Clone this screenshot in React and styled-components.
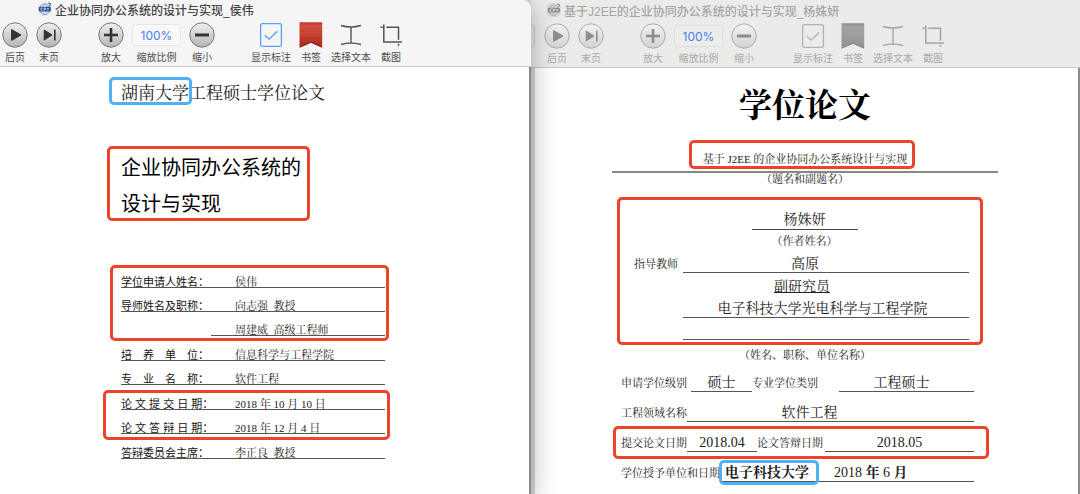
import React from 'react';
import styled, { createGlobalStyle } from 'styled-components';

const sans = '"Liberation Sans", "Noto Sans CJK SC", sans-serif';
const serif = '"Liberation Serif", "Noto Serif CJK SC", "Noto Sans CJK SC", serif';

const RED = '#ee432b';
const BLUE = '#4db1f7';

function AppIcon({ dimmed }) {
    const ring = dimmed ? '#b5b5b5' : '#7f95bd';
    const band = dimmed ? '#8c8c8c' : '#2b4f9e';
    return (
        <svg width="14" height="14" viewBox="0 0 14 14" aria-hidden="true">
            <rect x="0.5" y="0.5" width="13" height="13" rx="3" fill={dimmed ? '#e2e2e2' : '#fff'} stroke={dimmed ? '#d0d0d0' : '#dcdcdc'} strokeWidth="0.6" />
            <circle cx="6.8" cy="7.2" r="5.4" fill={dimmed ? '#cfcfcf' : '#cdd8ea'} stroke={ring} />
            <rect x="0.8" y="4.8" width="12" height="4.8" rx="1" fill={band} />
            <path d="M4.6 6H3v2.2h1.6M6.2 8.6V6h1.4v1.3H6.2M9 6l.9 1.1.9-1.1M9.9 7.1v1.5" fill="none" stroke="#fff" strokeWidth="0.6" />
            <path d="M10.3 1l2.2.8-.8 2.2" fill="none" stroke={dimmed ? '#777' : '#333'} />
        </svg>
    );
}

function RoundIcon({ id, dimmed, children }) {
    const color = dimmed ? '#8d8d8d' : '#333';
    return (
        <svg width="26" height="26" viewBox="0 0 26 26" fill={color} stroke={color} aria-hidden="true">
            <defs>
                <linearGradient id={id} x1="0" y1="0" x2="0" y2="1">
                    <stop offset="0" stopColor={dimmed ? '#f2f2f2' : '#f0f0f0'} />
                    <stop offset="1" stopColor={dimmed ? '#d2d2d2' : '#b4b4b4'} />
                </linearGradient>
            </defs>
            <circle cx="13" cy="13" r="12.2" fill={`url(#${id})`} stroke={dimmed ? '#aaa' : '#777'} />
            {children}
        </svg>
    );
}

function CheckIcon({ dimmed }) {
    return (
        <svg width="24" height="26" viewBox="0 0 24 26" fill="none" stroke={dimmed ? '#b2b2b2' : '#5c9df5'} aria-hidden="true">
            <rect x="1.6" y="1.7" width="20.8" height="22.6" rx="1.5" strokeWidth="1.3" />
            <path d="M6 13.2l4.2 4L18.2 9.2" strokeWidth="1.3" />
        </svg>
    );
}

function BookmarkIcon({ id, dimmed }) {
    return (
        <svg width="24" height="28" viewBox="0 0 24 28" aria-hidden="true">
            <defs>
                <linearGradient id={id} x1="0" y1="0" x2="0" y2="1">
                    <stop offset="0" stopColor={dimmed ? '#8e8e8e' : '#b93a2b'} />
                    <stop offset="0.15" stopColor={dimmed ? '#a2a2a2' : '#d24a38'} />
                    <stop offset="1" stopColor={dimmed ? '#929292' : '#ae2a1e'} />
                </linearGradient>
            </defs>
            <path d="M0.5 1.2H23.2V26.8L12 21.8 0.5 26.8Z" fill={`url(#${id})`} />
            <path d="M1 26L12 21.2 23 26" fill="none" stroke={dimmed ? '#858585' : '#7d2219'} />
            <path d="M1 5.5H23M1 8.5H23M1 11.5H23M1 14.5H23" stroke="#fff" strokeOpacity="0.06" />
        </svg>
    );
}

function TextSelectIcon({ dimmed }) {
    return (
        <svg width="22" height="22" viewBox="0 0 22 22" fill="none" stroke={dimmed ? '#a5a5a5' : '#555'} strokeWidth="1.4" aria-hidden="true">
            <path d="M1 1.5Q11 4.5 21 1.5M1 20.5Q11 17.5 21 20.5M11 3V19" />
        </svg>
    );
}

function CropIcon({ dimmed }) {
    return (
        <svg width="22" height="24" viewBox="0 0 22 24" fill="none" stroke={dimmed ? '#a5a5a5' : '#555'} strokeWidth="1.5" aria-hidden="true">
            <path d="M3.8 1.5V19H22M0.5 4.3H2.8M6.3 4.3H18.5V16.7M18.5 20.8V22.8" />
        </svg>
    );
}

function WindowHeader({ name, title, dimmed }) {
    return (
        <Header $dimmed={dimmed}>
            <TitleRow $dimmed={dimmed}>
                <AppIcon dimmed={dimmed} />
                <span>{title}</span>
            </TitleRow>
            <Toolbar $dimmed={dimmed}>
                {dimmed && <CutField />}
                <ToolGroup>
                    <Tool>
                        <Glyph>
                            <RoundIcon id={`${name}-next`} dimmed={dimmed}>
                                <path d="M9.6 7.6L19 13 9.6 18.4Z" />
                            </RoundIcon>
                        </Glyph>
                        后页
                    </Tool>
                    <Tool>
                        <Glyph>
                            <RoundIcon id={`${name}-last`} dimmed={dimmed}>
                                <path d="M8.2 8L16 13 8.2 18Z" />
                                <path d="M18.8 7.5V18.5" strokeWidth="1.6" />
                            </RoundIcon>
                        </Glyph>
                        末页
                    </Tool>
                </ToolGroup>
                <ToolGroup>
                    <Tool>
                        <Glyph>
                            <RoundIcon id={`${name}-in`} dimmed={dimmed}>
                                <path d="M13 6V20M6 13H20" strokeWidth="2.6" />
                            </RoundIcon>
                        </Glyph>
                        放大
                    </Tool>
                    <ZoomField $dimmed={dimmed}>
                        <Glyph>
                            <input type="text" defaultValue="100%" />
                        </Glyph>
                        缩放比例
                    </ZoomField>
                    <Tool>
                        <Glyph>
                            <RoundIcon id={`${name}-out`} dimmed={dimmed}>
                                <path d="M6 13H20" strokeWidth="3" />
                            </RoundIcon>
                        </Glyph>
                        缩小
                    </Tool>
                </ToolGroup>
                <ToolGroup>
                    <Tool $width={40}>
                        <Glyph><CheckIcon dimmed={dimmed} /></Glyph>
                        显示标注
                    </Tool>
                    <Tool $width={24}>
                        <Glyph><BookmarkIcon id={`${name}-mark`} dimmed={dimmed} /></Glyph>
                        书签
                    </Tool>
                    <Tool $width={40}>
                        <Glyph><TextSelectIcon dimmed={dimmed} /></Glyph>
                        选择文本
                    </Tool>
                    <Tool $width={24}>
                        <Glyph><CropIcon dimmed={dimmed} /></Glyph>
                        截图
                    </Tool>
                </ToolGroup>
            </Toolbar>
        </Header>
    );
}

function Row({ label, value, indent }) {
    return (
        <InfoRow $indent={indent}>
            {label && <dt>{label}</dt>}
            <dd>{value}</dd>
        </InfoRow>
    );
}

function HunanThesis() {
    return (
        <HunanPage>
            <School>
                <Marked as="span" $color={BLUE} $inset="-7px -3px -2px -12px">湖南大学</Marked>
                工程硕士学位论文
            </School>
            <ThesisTitle>
                <Marked as="span" $color={RED} $inset="-4px -9px 1px -14px">
                    企业协同办公系统的<br />设计与实现
                </Marked>
            </ThesisTitle>
            <InfoList>
                <Marked $color={RED} $inset="1px -4px -5px -11px">
                    <Row label="学位申请人姓名：" value="侯伟" />
                    <Row label="导师姓名及职称：" value="向志强  教授" />
                    <Row indent value="周建威  高级工程师" />
                </Marked>
                <div>
                    <Row label="培　养　单　位：" value="信息科学与工程学院" />
                    <Row label="专　业　名　称：" value="软件工程" />
                </div>
                <Marked $color={RED} $inset="4px -5px -6px -18px">
                    <Row label="论 文 提 交 日 期：" value="2018 年 10 月 10 日" />
                    <Row label="论 文 答 辩 日 期：" value="2018 年 12 月 4 日" />
                </Marked>
                <div>
                    <Row label="答辩委员会主席：" value="李正良  教授" />
                </div>
            </InfoList>
        </HunanPage>
    );
}

function UestcThesis() {
    return (
        <UestcPage>
            <Heading>学位论文</Heading>
            <Topic>
                <Marked as="span" $color={RED} $inset="-13px -8px -4px -14px">
                    基于 J2EE 的企业协同办公系统设计与实现
                </Marked>
            </Topic>
            <Caption>（题名和副题名）</Caption>
            <People>
                <Marked $color={RED} $inset="-15px -8px -5px -17px">
                    <Author>杨姝妍</Author>
                    <Caption $space={5}>（作者姓名）</Caption>
                    <Advisor>
                        <Label>指导教师</Label>
                        <Blank $shift={42}>高原</Blank>
                        <Blank $plain $shift={48}><u>副研究员</u></Blank>
                        <Blank $shift={7}>电子科技大学光电科学与工程学院</Blank>
                        <EmptyBlank />
                    </Advisor>
                </Marked>
            </People>
            <Caption $space={9}>（姓名、职称、单位名称）</Caption>
            <Fields>
                <Field>
                    <Label>申请学位级别</Label>
                    <Blank $width={61} $gap={4}>硕士</Blank>
                    <Label>专业学位类别</Label>
                    <Blank $gap={21} $shift={10}>工程硕士</Blank>
                </Field>
                <Field>
                    <Label>工程领域名称</Label>
                    <Blank $shift={42}>软件工程</Blank>
                </Field>
                <Marked $color={RED} $inset="-8px -15px -7px -8px">
                    <Field>
                        <Label>提交论文日期</Label>
                        <Blank $width={70}>2018.04</Blank>
                        <Label>论文答辩日期</Label>
                        <Blank $gap={2}>2018.05</Blank>
                    </Field>
                </Marked>
                <Field>
                    <Label>学位授予单位和日期</Label>
                    <Award>
                        <Marked as="strong" $color={BLUE} $inset="-5px -10px -4px -6px">电子科技大学</Marked>
                        <span>2018 <b>年</b> 6 <b>月</b></span>
                    </Award>
                </Field>
            </Fields>
        </UestcPage>
    );
}

function App() {
    return (
        <Desktop>
            <GlobalStyle />
            <FrontWindow>
                <WindowHeader name="front" title="企业协同办公系统的设计与实现_侯伟" />
                <HunanThesis />
            </FrontWindow>
            <BackWindow>
                <WindowHeader name="back" title="基于J2EE的企业协同办公系统的设计与实现_杨姝妍" dimmed />
                <UestcThesis />
            </BackWindow>
        </Desktop>
    );
}

export default App;

const GlobalStyle = createGlobalStyle`
    *{
        box-sizing: border-box;
    }
    body{
        margin: 0;
        font-family: ${sans};
    }
    h1, h2, p, dl, dd{
        margin: 0;
        font-weight: normal;
    }
`;

const Desktop = styled.main`
    display: grid;
    grid-template-columns: 531fr 549fr;
    min-height: 100vh;
    overflow: hidden;
    background: #d4d4d2;
`;

const FrontWindow = styled.section`
    display: flex;
    flex-direction: column;
    position: relative;
    z-index: 1;
    border-radius: 0 8px 0 0;
    background: #f5f5f5;
    box-shadow: 0 6px 26px rgba(0, 0, 0, 0.32);
`;

const BackWindow = styled.section`
    display: flex;
    flex-direction: column;
    background: #ebebea;
`;

const Header = styled.header`
    padding-top: ${p => p.$dimmed ? 1 : 0}px;
    border-bottom: 1px solid ${p => p.$dimmed ? '#c8c8c6' : '#cbcbcb'};
`;

const TitleRow = styled.div`
    display: flex;
    align-items: center;
    gap: 3px;
    height: 18px;
    margin-bottom: 3px;
    padding-left: ${p => p.$dimmed ? 16 : 38}px;
    color: ${p => p.$dimmed ? '#a6a6a6' : '#444'};
    font-size: 12px;
    font-weight: 500;
    white-space: nowrap;
`;

const Toolbar = styled.div`
    display: flex;
    gap: 36px;
    padding: 0 0 1px ${p => p.$dimmed ? 0 : 2}px;
    color: ${p => p.$dimmed ? '#a8a8a8' : '#4c4c4c'};
`;

const ToolGroup = styled.div`
    display: flex;
    gap: 8px;
`;

/* end of a field that the front window covers */
const CutField = styled.span`
    width: 4px;
    height: 22px;
    margin: 3px -27px 0 0;
    border: 1px solid #d2d2d0;
    border-left: 0;
    border-radius: 0 3px 3px 0;
`;

const Tool = styled.button`
    display: flex;
    flex-direction: column;
    align-items: center;
    gap: 2px;
    width: ${p => p.$width || 26}px;
    padding: 0;
    border: 0;
    background: none;
    color: inherit;
    font: 10px/14px ${sans};
    white-space: nowrap;
`;

const ZoomField = styled.label`
    display: flex;
    flex-direction: column;
    align-items: center;
    gap: 2px;
    width: 49px;
    font: 10px/14px ${sans};
    input{
        width: 100%;
        height: 22px;
        padding: 0;
        border: 1px solid ${p => p.$dimmed ? '#dededd' : '#e6e6e6'};
        border-radius: 3px;
        background: ${p => p.$dimmed ? '#ededec' : '#f8f8f8'};
        color: #4a7df0;
        font: 12px Inter, ${sans};
        text-align: center;
    }
`;

const Glyph = styled.span`
    display: flex;
    align-items: center;
    justify-content: center;
    height: 28px;
`;

/* hand-drawn frame over the text that is compared */
const Marked = styled.div`
    position: relative;
    &::after{
        content: "";
        position: absolute;
        inset: ${p => p.$inset};
        border: 3px solid ${p => p.$color};
        border-radius: 5px;
        pointer-events: none;
    }
`;

const HunanPage = styled.article`
    flex: 1;
    padding: 17px 144px 19px 121px;
    border-right: 2px solid #8a8a8a;
    background: #fff;
    color: #222;
`;

const School = styled.p`
    font: 17px/20px ${serif};
    white-space: nowrap;
`;

const ThesisTitle = styled.h1`
    margin-top: 46px;
    color: #000;
    font: 20px/36px ${sans};
    white-space: nowrap;
    span{
        display: inline-block;
    }
`;

const InfoList = styled.dl`
    display: flex;
    flex-direction: column;
    gap: 1px;
    margin-top: 42px;
    font-size: 11px;
    line-height: 10px;
    white-space: pre;
`;

const InfoRow = styled.div`
    display: grid;
    grid-template-columns: ${p => p.$indent ? '1fr' : '114px 1fr'};
    align-items: end;
    height: 24px;
    margin-left: ${p => p.$indent ? 90 : 0}px;
    padding-left: ${p => p.$indent ? 24 : 0}px;
    border-bottom: 1px solid #555;
    dt{
        color: #111;
    }
    dd{
        font-family: ${serif};
    }
`;

const UestcPage = styled.article`
    flex: 1;
    padding: 18px 80px 13px 77px;
    border: solid #8a8a8a;
    border-width: 0 2px 0 4px;
    border-left-color: #d8d8d8;
    background: #fff;
    color: #222;
    font-family: ${serif};
    white-space: nowrap;
`;

const Heading = styled.h1`
    color: #000;
    font: bold 33px/40px ${serif};
    text-align: center;
`;

const Topic = styled.h2`
    margin-top: 25px;
    padding-bottom: 4px;
    border-bottom: 2px solid #888;
    font: 11px/16px ${serif};
    text-align: center;
`;

const Caption = styled.p`
    margin-top: ${p => p.$space || 0}px;
    font-size: 11px;
    line-height: 12px;
    text-align: center;
`;

const People = styled.div`
    margin-top: 27px;
    padding: 0 23px 0 22px;
`;

const Author = styled.p`
    width: 106px;
    margin: 0 auto;
    padding-bottom: 1px;
    border-bottom: 1px solid #444;
    font-size: 14px;
    line-height: 16px;
    text-align: center;
`;

const Advisor = styled.div`
    display: grid;
    grid-template-columns: 44px 1fr;
    column-gap: 5px;
    row-gap: 5px;
    margin: 8px 6px 0 0;
    & > p{
        grid-column: 2;
    }
`;

const Label = styled.span`
    font-size: 11px;
    line-height: 18px;
`;

const Blank = styled.p`
    flex: ${p => p.$width ? `0 0 ${p.$width}px` : 1};
    margin-left: ${p => p.$gap || 0}px;
    padding: 1px ${p => p.$shift || 0}px 0 0;
    border-bottom: ${p => p.$plain ? 0 : 1}px solid #555;
    font-size: 14px;
    line-height: 16px;
    text-align: center;
`;

const EmptyBlank = styled(Blank)`
    height: 17px;
`;

const Fields = styled.div`
    display: flex;
    flex-direction: column;
    gap: 12px;
    margin: 13px 24px 0 9px;
`;

const Field = styled.div`
    display: flex;
`;

const Award = styled(Blank).attrs({ as: 'div' })`
    display: flex;
    gap: 25px;
    padding-left: 5px;
`;
